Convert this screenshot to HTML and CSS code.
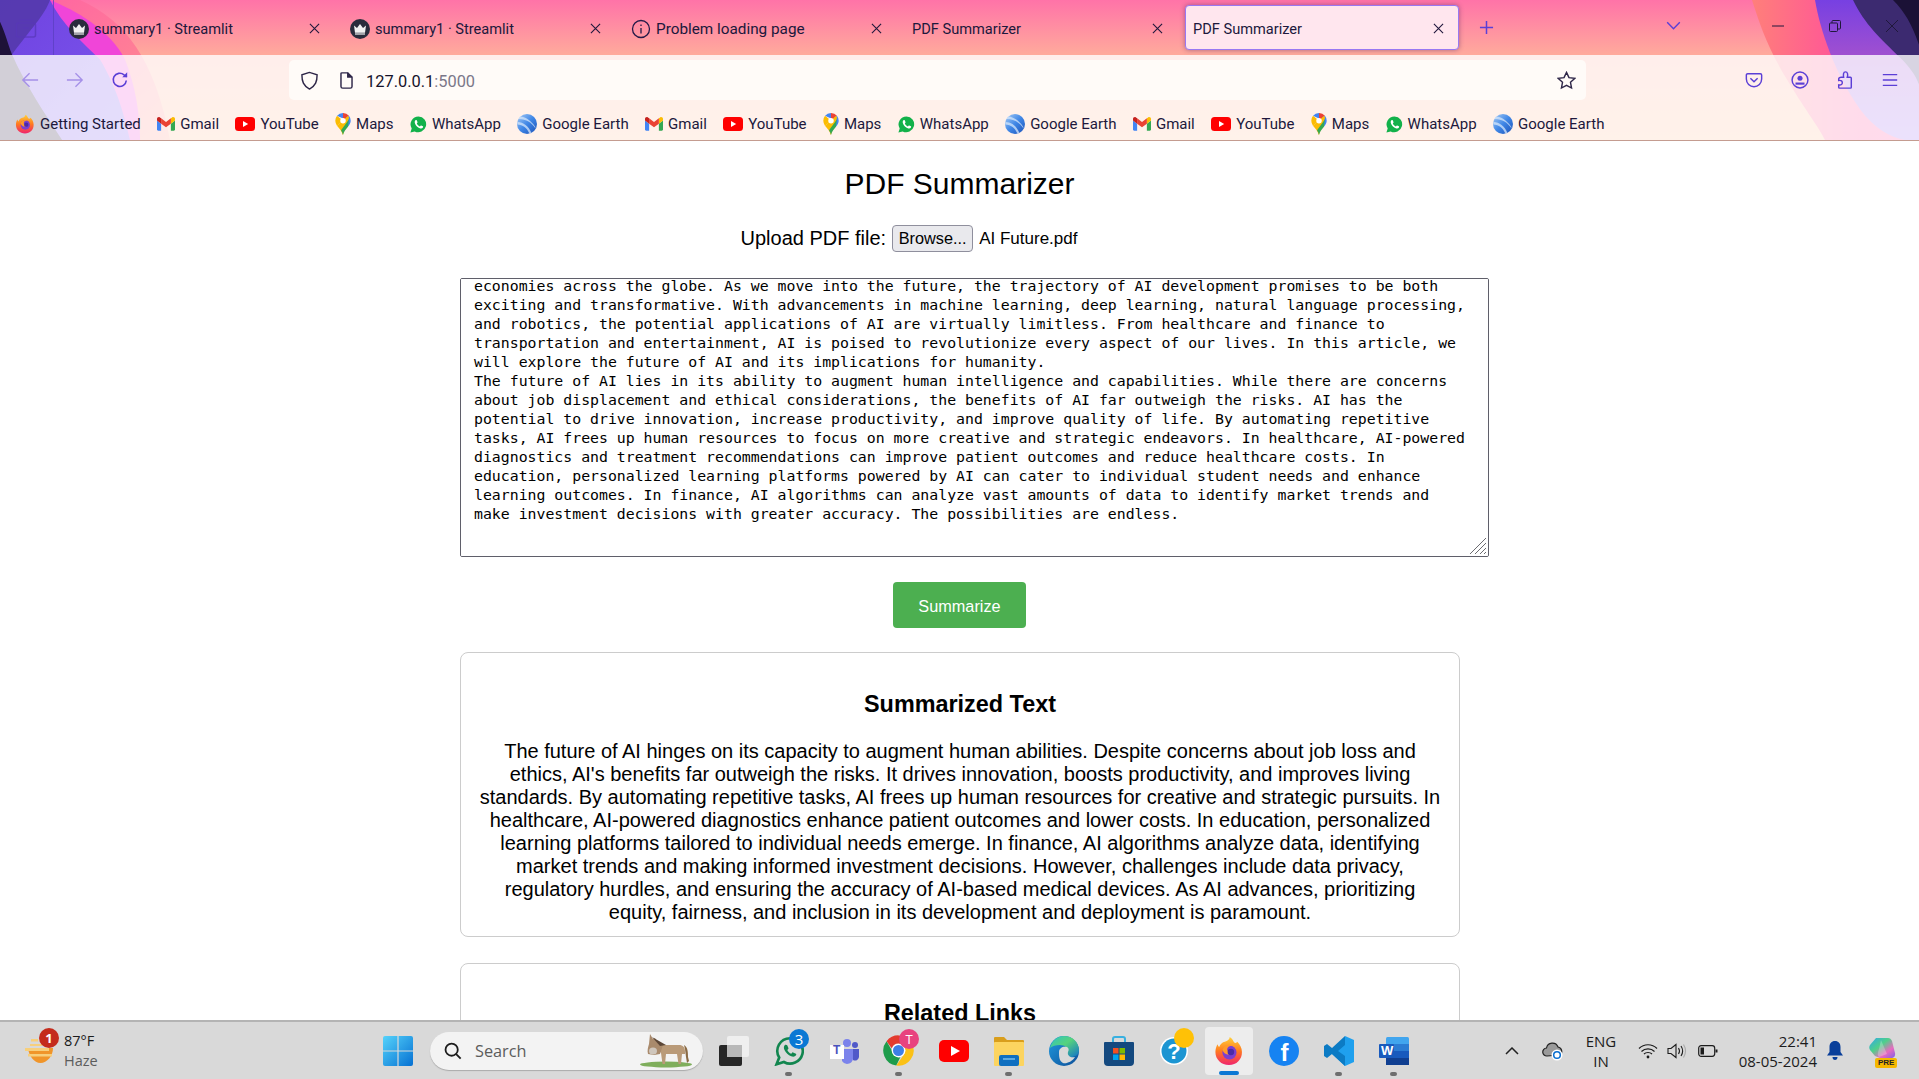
FILE: index.html
```html
<!DOCTYPE html>
<html lang="en">
<head>
<meta charset="utf-8">
<title>PDF Summarizer</title>
<link rel="stylesheet" href="styles.css">
</head>
<body>
<svg class="defs" aria-hidden="true">
  <defs>
    <linearGradient id="ffg" x1="0" y1="0" x2="0" y2="1"><stop offset="0" stop-color="#ffd23a"/><stop offset=".5" stop-color="#ff7a1f"/><stop offset="1" stop-color="#f0246e"/></linearGradient>
    <linearGradient id="edgeg" x1="0" y1="0" x2="1" y2="1"><stop offset="0" stop-color="#2fc4c4"/><stop offset=".45" stop-color="#56d37c"/><stop offset="1" stop-color="#1173c9"/></linearGradient>
    <linearGradient id="edgeb" x1="0" y1="0" x2="1" y2="1"><stop offset="0" stop-color="#1f9be0"/><stop offset="1" stop-color="#0f4f98"/></linearGradient>
    <linearGradient id="startg" x1="0" y1="0" x2="1" y2="1"><stop offset="0" stop-color="#55d3fb"/><stop offset="1" stop-color="#0670d2"/></linearGradient>
    <linearGradient id="earthg" x1="0" y1="0" x2="1" y2="1"><stop offset="0" stop-color="#a8cdf5"/><stop offset=".5" stop-color="#3f86e6"/><stop offset="1" stop-color="#1c53b8"/></linearGradient>
    <linearGradient id="copg" x1="0" y1="0" x2="1" y2="1"><stop offset="0" stop-color="#2fa8e8"/><stop offset=".4" stop-color="#4fd08a"/><stop offset=".7" stop-color="#e86ac0"/><stop offset="1" stop-color="#8060e8"/></linearGradient>
    <symbol id="ic-st" viewBox="0 0 20 20"><circle cx="10" cy="10" r="10" fill="#2a2c3c"/><path d="M4 6.500l3 2.600L10 5l3 4.100 3-2.600-1 7.200H5z" fill="#f2f2f2"/><rect x="5" y="14.400" width="10" height="1.200" fill="#f2f2f2"/></symbol>
    <symbol id="ic-ff" viewBox="0 0 32 32"><path d="M16 31C7.700 31 1.500 24.800 1.500 17c0-3.300 1-6.300 2.400-8.300.2 1.300.8 2.400 1.600 3.100C6.700 8.500 9 6.500 11.500 6c3-.6 5-2.500 5.300-5 4 2.600 3.500 5.500 6 6.500 1.500-.5 2-1.500 2-1.500 3 3 5 6.500 5 11C30 24.800 24 31 16 31z" fill="url(#ffg)"/><circle cx="16.500" cy="17.500" r="7.500" fill="#7a3fd0"/><path d="M9 15c1.500-5 7-7 12-4.500-4-.5-7 1-7 4 0 1.500 2 2.500 4 2.500 1.500 0 1 1.500-.5 2.500-3 1.500-7-.5-8.500-4.500z" fill="#ff9a2a"/><circle cx="18" cy="17" r="3.500" fill="#4a2aa8"/></symbol>
    <symbol id="ic-gm" viewBox="0 0 24 18"><path fill="#4285f4" d="M1.600 18H5.500V8.500L0 4.400V16.400C0 17.300.7 18 1.600 18z"/><path fill="#34a853" d="M18.500 18h3.900c.9 0 1.600-.7 1.600-1.600V4.400l-5.500 4.100z"/><path fill="#fbbc04" d="M18.500 1.400v7.100L24 4.400V2.200c0-2-2.300-3.200-3.900-2z"/><path fill="#ea4335" d="M5.500 8.500V1.400L12 6.300l6.500-4.900v7.100L12 13.400z"/><path fill="#c5221f" d="M0 2.200v2.200l5.500 4.100V1.400L3.900.2C2.300-1 0 .2 0 2.200z"/></symbol>
    <symbol id="ic-yt" viewBox="0 0 20 14"><rect width="20" height="14" rx="3.500" fill="#f00"/><path d="M8 4l5.200 3L8 10z" fill="#fff"/></symbol>
    <symbol id="ic-mp" viewBox="0 0 14 20"><path d="M7 0a7 7 0 0 1 5.400 2.500L7 7z" fill="#ea4335"/><path d="M1.600 2.500A7 7 0 0 1 7 0L7 5z" fill="#4285f4"/><path d="M0 7a7 7 0 0 1 1.600-4.500L7 7l-5.500 4.500Q0 9 0 7z" fill="#fbbc04"/><path d="M12.400 2.500A7 7 0 0 1 14 7c0 2-1 3.500-2.500 5.500L7 7z" fill="#4285f4"/><path d="M1.500 11.500L11.500 2.700 12.600 4 6.800 20C6 16 3.500 14 1.500 11.500z" fill="#fbbc04"/><path d="M11.500 12.500C9.500 15 7.800 16.500 7 20c-.3-1.500-.9-3-1.800-4.300L12.400 6z" fill="#34a853"/><circle cx="7" cy="7" r="2.500" fill="#fff"/></symbol>
    <symbol id="ic-wa" viewBox="0 0 20 20"><path d="M10 .5A9.300 9.300 0 0 0 2 14.600L.5 19.500l5-1.400A9.300 9.300 0 1 0 10 .5z" fill="#12b14a"/><path d="M6.500 5c-1 .8-1.300 2.200-.5 4 1 2.400 3 4.300 5.500 5.300 1.700.6 3 .2 3.700-.8.400-.6.300-1.200 0-1.400l-2-1c-.4-.1-.6 0-.8.300l-.7.900c-1.600-.6-3-1.900-3.700-3.500l.7-.8c.2-.3.2-.5.100-.8l-.9-2.100c-.3-.4-.9-.5-1.400-.1z" fill="#fff"/></symbol>
    <symbol id="ic-ea" viewBox="0 0 20 20"><circle cx="10" cy="10" r="10" fill="url(#earthg)"/><path d="M3 2.500c5 0 11 4 15 10 .5 1 .5 1.500.5 2-4-6-9-9.500-17-9.500zM.5 8c6 0 11 4 14 11l-2 .7C10 14 6 10.500.2 10.500z" fill="#d5e7fb" opacity=".75"/></symbol>
    <symbol id="ic-wa2" viewBox="0 0 30 30"><path d="M16 2.200A12.700 12.700 0 0 0 5.200 21.500L2.500 28.300l7.400-2.300A12.700 12.700 0 1 0 16 2.200z" fill="none" stroke="#12864f" stroke-width="2.600"/><path d="M11.200 8.800c-1.500 1.200-1.700 3-.7 5.200 1.400 3 3.700 5.200 6.700 6.300 2.200.8 3.900.3 4.800-1 .4-.7.3-1.300-.1-1.500l-2.800-1.400c-.4-.1-.7 0-.9.300l-1 1.100c-1.700-.7-3.100-2.100-3.900-3.900l.9-1c.3-.3.3-.6.200-1l-1.200-2.600c-.3-.6-1.400-.8-2-.5z" fill="#12864f"/></symbol>
  </defs>
</svg>

<div class="screen">
  <header class="chrome">
    <svg class="chrome-art" viewBox="0 0 1919 141" preserveAspectRatio="none" aria-hidden="true">
      <defs>
        <linearGradient id="basebg" x1="0" y1="0" x2="0" y2="1"><stop offset="0" stop-color="#ff73a8"/><stop offset=".39" stop-color="#ffaa9c"/><stop offset="1" stop-color="#ffbd95"/></linearGradient>
        <linearGradient id="mag" x1="0" y1="0" x2="1" y2="0"><stop offset="0" stop-color="#ff7f7a"/><stop offset=".6" stop-color="#ff4f9c"/><stop offset="1" stop-color="#ff48a0"/></linearGradient>
        <linearGradient id="viol" x1="0" y1="0" x2="1" y2="1"><stop offset="0" stop-color="#6f42e0"/><stop offset="1" stop-color="#7c58ee"/></linearGradient>
        <linearGradient id="violr" x1="0" y1="0" x2="0" y2="1"><stop offset="0" stop-color="#7740e2"/><stop offset=".4" stop-color="#a050d0"/><stop offset="1" stop-color="#9a6cf0"/></linearGradient>
        <linearGradient id="pinkl" x1="0" y1="0" x2="1" y2="1"><stop offset="0" stop-color="#ff5fa5"/><stop offset=".6" stop-color="#ff7f96"/><stop offset="1" stop-color="#ff9a88"/></linearGradient>
      </defs>
      <rect width="1919" height="141" fill="url(#basebg)"/>
      <path d="M80 0C125 20 155 60 170 141H0V0z" fill="url(#pinkl)"/>
      <path d="M50 0C75 10 110 30 125 60C135 85 140 115 140 141H0V0z" fill="#f045d8"/>
      <path d="M50 0C62 25 85 45 100 60C118 90 125 120 130 141H0V0z" fill="url(#viol)"/>
      <path d="M0 0H50C45 15 30 30 12 55C25 85 45 115 62 141H0z" fill="#5238a8" opacity=".85"/>
      <path d="M0 22C6 35 8 45 12 55C25 85 45 115 62 141H0z" fill="#1e1238"/>
      <path d="M1752 0C1760 25 1768 50 1790 85C1805 110 1820 130 1825 141H1919V0z" fill="url(#mag)"/>
      <path d="M1815 0C1820 30 1835 75 1860 110C1875 130 1890 138 1905 141H1919V0z" fill="url(#violr)"/>
      <path d="M1853 0C1865 25 1880 38 1900 58C1910 68 1915 75 1919 85V0z" fill="#3c2a70"/>
      <path d="M1893 0C1905 12 1912 25 1919 45V0z" fill="#1b1136"/>
    </svg>

    <div class="tabbar">
      <div class="side-btn">
        <svg width="22" height="22" viewBox="0 0 22 22" fill="none" stroke="#5838b8" stroke-width="1.500"><rect x="1.500" y="6" width="19" height="14" rx="2"/><path d="M4 3h14M8 11h6"/></svg>
      </div>
      <div class="tab"><svg class="fav"><use href="#ic-st"/></svg><span class="tab-title">summary1 · Streamlit</span><span class="tab-x"><svg viewBox="0 0 12 12"><path d="M1 1l10 10M11 1L1 11"/></svg></span></div>
      <div class="tab"><svg class="fav"><use href="#ic-st"/></svg><span class="tab-title">summary1 · Streamlit</span><span class="tab-x"><svg viewBox="0 0 12 12"><path d="M1 1l10 10M11 1L1 11"/></svg></span></div>
      <div class="tab"><svg class="fav" viewBox="0 0 20 20" fill="none" stroke="#251a48" stroke-width="1.300"><circle cx="10" cy="10" r="8.500"/><path d="M10 9v5.500M10 5.500v1.500"/></svg><span class="tab-title tab-title-wide">Problem loading page</span><span class="tab-x"><svg viewBox="0 0 12 12"><path d="M1 1l10 10M11 1L1 11"/></svg></span></div>
      <div class="tab"><span class="tab-title">PDF Summarizer</span><span class="tab-x"><svg viewBox="0 0 12 12"><path d="M1 1l10 10M11 1L1 11"/></svg></span></div>
      <div class="tab tab-active"><span class="tab-title">PDF Summarizer</span><span class="tab-x"><svg viewBox="0 0 12 12"><path d="M1 1l10 10M11 1L1 11"/></svg></span></div>
      <svg class="newtab" viewBox="0 0 16 16" fill="none" stroke="#5b3fd6" stroke-width="1.600"><path d="M8 1v14M1 8h14"/></svg>
      <svg class="alltabs" viewBox="0 0 16 10" fill="none" stroke="#5b3fd6" stroke-width="1.600"><path d="M1 1.500l7 7 7-7"/></svg>
      <svg class="winbtn win-min" viewBox="0 0 12 12" fill="none" stroke="#20183c" stroke-width="1"><path d="M0 6h12"/></svg>
      <svg class="winbtn win-res" viewBox="0 0 12 12" fill="none" stroke="#20183c" stroke-width="1"><rect x=".5" y="3" width="8" height="8.500" rx="1"/><path d="M3 3V1.500a1 1 0 0 1 1-1h6.500a1 1 0 0 1 1 1V8a1 1 0 0 1-1 1H8.500"/></svg>
      <svg class="winbtn win-cls" viewBox="0 0 12 12" fill="none" stroke="#20183c" stroke-width="1"><path d="M0 0l12 12M12 0L0 12"/></svg>
    </div>

    <div class="toolbar-wrap">
      <div class="toolbar">
        <svg class="tool tool-back" viewBox="0 0 20 20" fill="none" stroke="#a590e8" stroke-width="1.500"><path d="M19 10H2M9.500 2.500L2 10l7.500 7.500"/></svg>
        <svg class="tool tool-fwd" viewBox="0 0 20 20" fill="none" stroke="#a590e8" stroke-width="1.500"><path d="M1 10h17M10.500 2.500L18 10l-7.500 7.500"/></svg>
        <svg class="tool tool-rel" viewBox="0 0 20 20" fill="none" stroke="#5b3fd6" stroke-width="1.800"><path d="M17 10.500A7.300 7.300 0 1 1 14.500 4.300L17.500 6.500"/><path d="M18 1.500v5.500h-5.500" fill="#5b3fd6" stroke="none"/></svg>
        <div class="urlbar">
          <svg class="u-shield" viewBox="0 0 20 20" fill="none" stroke="#2e2648" stroke-width="1.500"><path d="M10 1.500L2 4c0 7 1.500 11.500 8 15 6.500-3.500 8-8 8-15z"/></svg>
          <svg class="u-page" viewBox="0 0 16 20" fill="none" stroke="#2e2648" stroke-width="1.700"><path d="M2.500 1h7L14.500 6v11a2 2 0 0 1-2 2h-9a2 2 0 0 1-2-2V2a1 1 0 0 1 1-1z"/><path d="M9.500 1v5h5" fill="#2e2648"/></svg>
          <span class="u-text">127.0.0.1<span class="u-port">:5000</span></span>
          <svg class="u-star" viewBox="0 0 20 20" fill="none" stroke="#2e2648" stroke-width="1.500"><path d="M10 1.500l2.600 5.500 6 .8-4.400 4.100 1.100 6L10 15l-5.300 2.900 1.100-6L1.400 7.800l6-.8z"/></svg>
        </div>
        <svg class="tool tool-pk" viewBox="0 0 20 20" fill="none" stroke="#5b3fd6" stroke-width="1.600"><path d="M3 3h14a1.500 1.500 0 0 1 1.500 1.500V9a8.500 8.500 0 0 1-17 0V4.500A1.500 1.500 0 0 1 3 3z"/><path d="M6 8l4 4 4-4"/></svg>
        <svg class="tool tool-ac" viewBox="0 0 20 20" fill="none" stroke="#5b3fd6" stroke-width="1.600"><circle cx="10" cy="10" r="8.800"/><circle cx="10" cy="8" r="2.800" fill="#5b3fd6" stroke="none"/><path d="M5 14h10" stroke-width="2.400"/></svg>
        <svg class="tool tool-ex" viewBox="0 0 20 20" fill="none" stroke="#5b3fd6" stroke-width="1.600"><path d="M3 19h13a1 1 0 0 0 1-1V8a1 1 0 0 0-1-1h-3.500C13.500 4 13 1 10.500 1S8 4 8.500 7H6C4.800 7 3 7.500 3 9v1.500C6 10 7 11.500 7 13s-1 3-4 2.500V18a1 1 0 0 0 1 1z"/></svg>
        <svg class="tool tool-mn" viewBox="0 0 20 20" fill="none" stroke="#5b3fd6" stroke-width="1.600"><path d="M2 4h16M2 10h16M2 16h16"/></svg>
      </div>
      <nav class="bookmarks">
        <a class="bm"><svg class="bi"><use href="#ic-ff"/></svg>Getting Started</a>
        <a class="bm"><svg class="bi bi-gm"><use href="#ic-gm"/></svg>Gmail</a>
        <a class="bm"><svg class="bi bi-yt"><use href="#ic-yt"/></svg>YouTube</a>
        <a class="bm"><svg class="bi bi-mp"><use href="#ic-mp"/></svg>Maps</a>
        <a class="bm"><svg class="bi bi-wa"><use href="#ic-wa"/></svg>WhatsApp</a>
        <a class="bm"><svg class="bi"><use href="#ic-ea"/></svg>Google Earth</a>
        <a class="bm"><svg class="bi bi-gm"><use href="#ic-gm"/></svg>Gmail</a>
        <a class="bm"><svg class="bi bi-yt"><use href="#ic-yt"/></svg>YouTube</a>
        <a class="bm"><svg class="bi bi-mp"><use href="#ic-mp"/></svg>Maps</a>
        <a class="bm"><svg class="bi bi-wa"><use href="#ic-wa"/></svg>WhatsApp</a>
        <a class="bm"><svg class="bi"><use href="#ic-ea"/></svg>Google Earth</a>
        <a class="bm"><svg class="bi bi-gm"><use href="#ic-gm"/></svg>Gmail</a>
        <a class="bm"><svg class="bi bi-yt"><use href="#ic-yt"/></svg>YouTube</a>
        <a class="bm"><svg class="bi bi-mp"><use href="#ic-mp"/></svg>Maps</a>
        <a class="bm"><svg class="bi bi-wa"><use href="#ic-wa"/></svg>WhatsApp</a>
        <a class="bm"><svg class="bi"><use href="#ic-ea"/></svg>Google Earth</a>
      </nav>
    </div>
  </header>

  <main class="page">
    <h1 class="title">PDF Summarizer</h1>
    <div class="upload">
      <label class="upload-label">Upload PDF file:</label>
      <button class="browse" type="button">Browse...</button>
      <span class="filename">AI Future.pdf</span>
    </div>
    <div class="text-wrap">
      <textarea class="source" readonly spellcheck="false">economies across the globe. As we move into the future, the trajectory of AI development promises to be both
exciting and transformative. With advancements in machine learning, deep learning, natural language processing,
and robotics, the potential applications of AI are virtually limitless. From healthcare and finance to
transportation and entertainment, AI is poised to revolutionize every aspect of our lives. In this article, we
will explore the future of AI and its implications for humanity.
The future of AI lies in its ability to augment human intelligence and capabilities. While there are concerns
about job displacement and ethical considerations, the benefits of AI far outweigh the risks. AI has the
potential to drive innovation, increase productivity, and improve quality of life. By automating repetitive
tasks, AI frees up human resources to focus on more creative and strategic endeavors. In healthcare, AI-powered
diagnostics and treatment recommendations can improve patient outcomes and reduce healthcare costs. In
education, personalized learning platforms powered by AI can cater to individual student needs and enhance
learning outcomes. In finance, AI algorithms can analyze vast amounts of data to identify market trends and
make investment decisions with greater accuracy. The possibilities are endless.</textarea>
      <svg class="grip" viewBox="0 0 18 18" fill="none" stroke="#6b6b70" stroke-width="1"><path d="M1 17L17 1M6 17L17 6M11 17l6-6M15 17l2-2"/></svg>
    </div>
    <div class="actions"><button class="summarize" type="button">Summarize</button></div>
    <section class="card card-summary">
      <h2 class="card-title">Summarized Text</h2>
      <p class="card-text">The future of AI hinges on its capacity to augment human abilities. Despite concerns about job loss and<br>ethics, AI's benefits far outweigh the risks. It drives innovation, boosts productivity, and improves living<br>standards. By automating repetitive tasks, AI frees up human resources for creative and strategic pursuits. In<br>healthcare, AI-powered diagnostics enhance patient outcomes and lower costs. In education, personalized<br>learning platforms tailored to individual needs emerge. In finance, AI algorithms analyze data, identifying<br>market trends and making informed investment decisions. However, challenges include data privacy,<br>regulatory hurdles, and ensuring the accuracy of AI-based medical devices. As AI advances, prioritizing<br>equity, fairness, and inclusion in its development and deployment is paramount.</p>
    </section>
    <section class="card card-links">
      <h2 class="card-title">Related Links</h2>
    </section>
  </main>

  <footer class="taskbar">
    <div class="tb-weather">
      <div class="weather-ic">
        <svg viewBox="0 0 30 30"><path d="M3 12h25c0 8-6 15-12.500 15S4 20 3 12z" fill="#f0952a"/><path d="M0 12h24v3H0zM3 18h24v2.500H3zM6 3h7v2.500H6zM5 8h12v2H5z" fill="#f7cf7c"/></svg>
        <span class="badge badge-red">1</span>
      </div>
      <div class="weather-text"><span class="w-temp">87°F</span><span class="w-desc">Haze</span></div>
    </div>
    <svg class="start" viewBox="0 0 30 30"><path d="M0 2a2 2 0 0 1 2-2h12.400v14.400H0zM15.600 0H28a2 2 0 0 1 2 2v12.400H15.600zM0 15.600h14.400V30H2a2 2 0 0 1-2-2zM15.600 15.600H30V28a2 2 0 0 1-2 2H15.600z" fill="url(#startg)"/></svg>
    <div class="search">
      <svg class="search-ic" viewBox="0 0 20 20" fill="none" stroke="#1c1c1c" stroke-width="2"><circle cx="8.500" cy="8.500" r="6.800"/><path d="M13.500 13.500L18.500 18.500"/></svg>
      <span class="search-text">Search</span>
      <svg class="donkey" viewBox="0 0 54 34">
        <ellipse cx="27" cy="30.500" rx="26" ry="3" fill="#7fae5c"/>
        <path d="M22 11h18c4 0 6 2 6 7v2h-3l-1 10h-2.500l-1.500-10h-11l-1 10h-2.500l-1.500-11-2-3z" fill="#b99a78"/>
        <path d="M11 0l3 5 2-1 2 4 6 3-3 9-6 1-6-1c-1-3 0-7 1-10z" fill="#a98a6c"/>
        <path d="M13 3l14 8-6 1z" fill="#5b4636"/>
        <ellipse cx="14" cy="17" rx="4" ry="3.500" fill="#cfc6bc"/>
        <path d="M45 11c4 2 4 8 4 12l1 4-2 2-1-6-1-8z" fill="#8a6a44"/>
      </svg>
    </div>
    <div class="apps">
      <div class="app"><svg class="ai" viewBox="0 0 30 30"><rect x="0" y="9" width="23" height="21" rx="2" fill="#262626"/><rect x="8" y="0" width="22" height="21" rx="2" fill="#f2f2f2" opacity=".85"/><rect x="8" y="9" width="15" height="12" fill="#b8b8b8"/></svg></div>
      <div class="app app-run"><svg class="ai"><use href="#ic-wa2"/></svg><span class="badge badge-blue">3</span></div>
      <div class="app"><svg class="ai" viewBox="0 0 30 30"><circle cx="18" cy="7" r="4" fill="#7b83eb"/><circle cx="26" cy="9" r="3" fill="#5059c9"/><path d="M13 13h11v10a6 6 0 0 1-11 2z" fill="#7b83eb"/><path d="M24 13h6v8a4 4 0 0 1-6 3z" fill="#5059c9"/><rect x="1" y="9" width="14" height="14" fill="#fff"/></svg><span class="teams-t">T</span></div>
      <div class="app app-run"><svg class="ai ai-lg" viewBox="0 0 24 24"><path d="M12 1A11 11 0 0 1 21.800 7H12a5 5 0 0 0-4.800 3.500L3.300 5.200A11 11 0 0 1 12 1z" fill="#e33b2e"/><path d="M3.300 5.200l5 8.700a5 5 0 0 0 5 3L10.400 22.900A11 11 0 0 1 3.300 5.200z" fill="#1e9c4b"/><path d="M21.800 7a11 11 0 0 1-11.400 15.900l5.900-8.500A5 5 0 0 0 15.500 8.500z" fill="#fbc116"/><circle cx="12" cy="12" r="5" fill="#fff"/><circle cx="12" cy="12" r="4" fill="#3d7fe6"/></svg><span class="badge badge-pink">T</span></div>
      <div class="app"><svg class="ai" viewBox="0 0 30 30"><rect y="4" width="30" height="22" rx="5" fill="#f00"/><path d="M12 10l9 5-9 5z" fill="#fff"/></svg></div>
      <div class="app app-run"><svg class="ai" viewBox="0 0 30 30"><path d="M0 2a1 1 0 0 1 1-1h9l3 3h16a1 1 0 0 1 1 1v4H0z" fill="#d99e1c"/><rect y="6" width="30" height="24" rx="1" fill="#fcd45f"/><rect x="5" y="19" width="20" height="11" rx="2" fill="#0f6fc0"/><path d="M9 23h12" stroke="#7fc4f0" stroke-width="1.400"/></svg></div>
      <div class="app"><svg class="ai" viewBox="0 0 30 30"><circle cx="15" cy="15" r="15" fill="url(#edgeb)"/><path d="M1 12C3 4 9 0 15 0c8 0 15 6 15 14 0 5-4 7-8 7-3 0-4-1-4-3 0-1 1-2 1-3 0-3-3-6-8-6-4 0-8 1-10 3z" fill="url(#edgeg)"/><path d="M10 16c0-4 4-6 8-5 2 1 2 3 1 5-1 4 3 6 7 5-3 5-9 7-12 6-4-2-4-7-4-11z" fill="#d9d9d9"/></svg></div>
      <div class="app"><svg class="ai" viewBox="0 0 30 30"><path d="M9 7V3a2 2 0 0 1 2-2h8a2 2 0 0 1 2 2v4" fill="none" stroke="#38b0e0" stroke-width="2"/><path d="M1 6h28a1 1 0 0 1 1 1v19a4 4 0 0 1-4 4H4a4 4 0 0 1-4-4V7a1 1 0 0 1 1-1z" fill="#14497f"/><rect x="9" y="12" width="5.500" height="5.500" fill="#f25022"/><rect x="15.500" y="12" width="5.500" height="5.500" fill="#7fba00"/><rect x="9" y="18.500" width="5.500" height="5.500" fill="#00a4ef"/><rect x="15.500" y="18.500" width="5.500" height="5.500" fill="#ffb900"/></svg></div>
      <div class="app"><svg class="ai" viewBox="0 0 30 30"><circle cx="15" cy="15" r="14" fill="#fff"/><circle cx="15" cy="15" r="12.500" fill="#1c95d2"/><text x="15" y="22.500" class="help-q">?</text></svg><span class="badge badge-yellow"></span></div>
      <div class="app app-active"><svg class="ai"><use href="#ic-ff"/></svg></div>
      <div class="app"><svg class="ai" viewBox="0 0 30 30"><circle cx="15" cy="15" r="15" fill="#1683f2"/><text x="15.500" y="25" class="fb-f">f</text></svg></div>
      <div class="app app-run"><svg class="ai" viewBox="0 0 30 30"><path d="M21 0l9 4v22l-9 4-13-12 13-10z" fill="#1fa0ee"/><path d="M21 0L8 12 3 8 0 10v10l3 2 5-4 13 12V20l-7-5 7-6z" fill="#0c7bc4"/></svg></div>
      <div class="app app-run"><svg class="ai" viewBox="0 0 30 30"><rect x="7" y="1" width="23" height="28" rx="1.500" fill="#41a5ee"/><rect x="7" y="8" width="23" height="7" fill="#2b7cd3"/><rect x="7" y="15" width="23" height="7" fill="#185abd"/><rect x="7" y="22" width="23" height="7" fill="#103f91"/><rect x="0" y="8" width="15" height="14" rx="1" fill="#185abd"/></svg><span class="word-w">W</span></div>
    </div>
    <div class="tray">
      <svg class="t-chev" viewBox="0 0 14 8" fill="none" stroke="#222" stroke-width="1.500"><path d="M1 7l6-6 6 6"/></svg>
      <svg class="t-cloud" viewBox="0 0 22 20"><path d="M5 15a4 4 0 0 1-.5-8A6 6 0 0 1 16 6a4.500 4.500 0 0 1 2 8z" fill="#9a9a9a" stroke="#222" stroke-width="1.200"/><circle cx="15" cy="14" r="5.500" fill="#fff"/><circle cx="15" cy="14" r="3.300" fill="none" stroke="#0a6fd0" stroke-width="1.500"/></svg>
      <div class="t-lang"><span>ENG</span><span>IN</span></div>
      <svg class="t-wifi" viewBox="0 0 20 16" fill="none" stroke="#1c1c1c" stroke-width="1.200"><path d="M1 5.500c5-5 13-5 18 0M3.500 8.500c3.500-3.500 9.500-3.500 13 0M6 11c2-2 6-2 8 0"/><circle cx="10" cy="14" r="1.400" fill="#1c1c1c" stroke="none"/></svg>
      <svg class="t-vol" viewBox="0 0 20 16" fill="none" stroke="#1c1c1c" stroke-width="1.100"><path d="M1 5.500h3L9 1.500v13L4 10.500H1z"/><path d="M11.500 5c1.200 1.800 1.200 4.200 0 6M14 3c2 3 2 7 0 10"/><path d="M16.500 1.500c2.500 4 2.500 9 0 13" stroke="#aaa"/></svg>
      <svg class="t-bat" viewBox="0 0 20 12" fill="none" stroke="#1c1c1c" stroke-width="1.200"><rect x=".7" y=".7" width="16" height="10.600" rx="2.500"/><rect x="2.500" y="2.500" width="3.500" height="7" fill="#1c1c1c" stroke="none"/><path d="M18.500 4.500v3" stroke-width="2"/></svg>
      <div class="t-clock"><span>22:41</span><span>08-05-2024</span></div>
      <svg class="t-bell" viewBox="0 0 16 20"><path d="M8 0c3.500 0 5.500 2.500 5.500 6v5l2.500 3.500H0L2.500 11V6C2.500 2.500 4.500 0 8 0z" fill="#0a3f9a"/><path d="M5.500 16h5c0 2-1 3-2.500 3s-2.500-1-2.500-3z" fill="#0a3f9a"/></svg>
      <div class="t-copilot">
        <svg viewBox="0 0 28 26"><path d="M8 2h12c2 0 3 1 4 3l3 12c.5 3-1 5-4 5H12l-5-2-5-6c-1-2-1-3 0-5z" fill="url(#copg)"/><path d="M13 4l6 14-8 3c-2-2-1-5 0-8z" fill="#fff" opacity=".25"/></svg>
        <span class="pre">PRE</span>
      </div>
    </div>
  </footer>
</div>
</body>
</html>
```

FILE: styles.css
```css
* { box-sizing: border-box; }
html, body { margin: 0; padding: 0; height: 100%; overflow: hidden; background: #fff; }
.defs { position: absolute; width: 0; height: 0; }
.screen { width: 1919px; height: 1079px; display: flex; flex-direction: column; overflow: hidden; font-family: "Liberation Sans", Arial, sans-serif; }

/* browser chrome */
.chrome { position: relative; height: 141px; flex: none; color: #20183c; font-family: Roboto, "Open Sans", sans-serif; border-bottom: 1px solid #c49c90; }
.chrome-art { position: absolute; left: 0; top: 0; width: 100%; height: 100%; }
.tabbar { position: relative; height: 55px; display: flex; align-items: center; }
.side-btn { width: 54px; height: 55px; padding: 17px 0 0 15px; margin-right: 7px; flex: none; border-right: 1px solid #5a3fc0; opacity: .75; }
.tab { width: 274px; height: 45px; margin-right: 7px; padding: 2px 13px 0 8px; display: flex; align-items: center; flex: none; font-size: 14.6px; border-radius: 4px; }
.tab-active { background: #ffe6ee; border: 1px solid #9878f2; box-shadow: 0 0 5px rgba(60, 30, 90, .45); padding: 2px 12px 0 7px; }
.fav { width: 20px; height: 20px; margin-right: 5px; flex: none; }
.tab-title { flex: 1; white-space: nowrap; }
.tab-title-wide { font-size: 15.300px; }
.tab-x { width: 14px; height: 14px; display: flex; flex: none; }
.tab-x svg { width: 11px; height: 11px; fill: none; stroke: #20183c; stroke-width: 1.200; margin: 1px; }
.newtab { width: 15px; height: 15px; margin-left: 13px; flex: none; }
.alltabs { width: 15px; height: 9px; margin-left: 172px; margin-top: -4px; flex: none; }
.winbtn { width: 12px; height: 12px; flex: none; margin-top: -3px; }
.win-min { margin-left: 91px; }
.win-res { margin-left: 45px; }
.win-cls { margin-left: 45px; }

.toolbar-wrap { position: relative; height: 85px; background: rgba(255, 255, 255, .8); }
.toolbar { height: 50px; display: flex; align-items: center; padding-left: 21px; }
.tool { width: 18px; height: 18px; flex: none; }
.tool-fwd { margin-left: 27px; }
.tool-rel { margin-left: 27px; }
.urlbar { width: 1297px; height: 40px; margin: 0 0 0 160px; padding: 0 10px 0 11px; background: #fffbf8; border-radius: 5px; display: flex; align-items: center; flex: none; }
.u-shield { width: 19px; height: 19px; flex: none; }
.u-page { width: 15px; height: 17px; margin-left: 20px; flex: none; }
.u-text { font-size: 16.400px; margin-left: 12px; padding-top: 2px; flex: 1; color: #15122a; }
.u-port { color: #7b7789; }
.u-star { width: 19px; height: 19px; flex: none; }
.tool-pk { margin-left: 159px; }
.tool-ac { margin-left: 28px; }
.tool-ex { margin-left: 27px; }
.tool-mn { margin-left: 27px; }
.bookmarks { height: 35px; display: flex; align-items: center; padding-left: 15px; padding-top: 3px; gap: 16.400px; font-size: 15px; }
.bm { display: flex; align-items: center; gap: 5px; white-space: nowrap; }
.bi { width: 20px; height: 20px; flex: none; }
.bi-gm { width: 18px; height: 14px; }
.bi-yt { width: 20px; height: 14px; }
.bi-mp { width: 16px; height: 22px; }
.bi-wa { width: 17px; height: 17px; }

/* page */
.page { flex: 1; min-height: 0; overflow: hidden; background: #fff; color: #000; padding-top: 24px; }
.title { margin: 0; height: 37px; line-height: 37px; text-align: center; font-size: 30px; font-weight: 400; }
.upload { margin-top: 23px; padding-right: 101px; height: 27px; display: flex; justify-content: center; align-items: center; }
.upload-label { font-size: 20px; }
.browse { margin-left: 6px; width: 81px; height: 27px; padding: 0; font: 16.300px "Liberation Sans", Arial, sans-serif; color: #000; background: #e9e9ed; border: 1px solid #8f8f9d; border-radius: 4px; }
.filename { margin-left: 6px; font-size: 17px; }
.text-wrap { position: relative; width: 1029px; height: 279px; margin: 26px 0 0 460px; border: 1px solid #5f5f6a; border-radius: 2px; overflow: hidden; }
.source { display: block; width: 100%; height: 285px; margin: -3px 0 0; padding: 0 0 0 13px; border: 0; resize: none; overflow: hidden; white-space: pre; font-family: "DejaVu Sans Mono", monospace; font-size: 14.830px; line-height: 19px; color: #000; background: #fff; outline: none; }
.grip { position: absolute; right: 1px; bottom: 1px; width: 18px; height: 18px; }
.actions { margin-top: 25px; display: flex; justify-content: center; }
.summarize { width: 133px; height: 46px; padding: 2px 0 0; border: 0; border-radius: 4px; background: #4caf50; color: #fff; font: 16.300px "Liberation Sans", Arial, sans-serif; }
.card { width: 1000px; margin: 24px 0 0 460px; border: 1px solid #ccc; border-radius: 8px; padding: 0 10px; text-align: center; }
.card-summary { height: 285px; padding-top: 37px; }
.card-links { margin-top: 26px; height: 200px; padding-top: 35px; }
.card-title { margin: 0; font-size: 23.400px; line-height: 28px; font-weight: 700; }
.card-text { margin: 22px 0 0; font-size: 20px; line-height: 23px; white-space: nowrap; }

/* taskbar */
.taskbar { position: relative; height: 59px; flex: none; display: flex; align-items: center; background: #d9d9d9; border-top: 2px solid #b4b4b4; font-family: "Open Sans", Roboto, sans-serif; color: #1c1c1c; }
.tb-weather { width: 383px; display: flex; padding-left: 25px; align-items: center; flex: none; }
.weather-ic { position: relative; width: 30px; height: 30px; }
.weather-text { margin-left: 9px; display: flex; flex-direction: column; font-size: 14.500px; line-height: 20px; }
.w-desc { color: #5c5c5c; }
.badge { position: absolute; border-radius: 50%; color: #fff; display: flex; align-items: center; justify-content: center; font-size: 13px; width: 20px; height: 20px; }
.badge-red { left: 14px; top: -8px; background: #c42b1c; font-weight: 700; }
.badge-blue { left: 28px; top: 7px; background: #0a78d4; font-size: 15px; }
.badge-pink { left: 28px; top: 7px; background: #e8437f; }
.badge-yellow { left: 28px; top: 6px; background: #ffc107; }
.start { width: 30px; height: 30px; flex: none; }
.search { width: 273px; height: 38px; margin-left: 17px; padding-left: 14px; border-radius: 19px; background: #f3f3f3; box-shadow: 0 1px 1px #aaa; display: flex; align-items: center; flex: none; }
.search-ic { width: 18px; height: 18px; flex: none; }
.search-text { margin-left: 13px; flex: 1; font-size: 16.300px; color: #5c5c5c; }
.donkey { width: 54px; height: 34px; margin-right: 10px; flex: none; }
.apps { display: flex; margin-left: 3px; flex: none; }
.app { position: relative; width: 55px; height: 57px; display: flex; align-items: center; justify-content: center; }
.ai { width: 30px; height: 30px; }
.ai-lg { width: 33px; height: 33px; }
.app-run::after { content: ""; position: absolute; left: 24px; bottom: 3px; width: 7px; height: 4px; border-radius: 2px; background: #6e6e6e; }
.app-active::before { content: ""; position: absolute; left: 4px; top: 5px; width: 48px; height: 48px; border-radius: 4px; background: #ededed; }
.app-active::after { content: ""; position: absolute; left: 18px; bottom: 4px; width: 20px; height: 4px; border-radius: 2px; background: #0a78d4; }
.app-active .ai { position: relative; }
.teams-t { position: absolute; left: 17px; top: 21px; font: 700 12px "Liberation Sans", sans-serif; color: #4b53bc; }
.word-w { position: absolute; left: 15px; top: 21px; font: 700 13px "Liberation Sans", sans-serif; color: #fff; }
.help-q { font: 700 22px "Liberation Sans", sans-serif; fill: #fff; text-anchor: middle; }
.fb-f { font: 700 24px "Liberation Sans", sans-serif; fill: #fff; text-anchor: middle; }
.tray { margin-left: 84px; display: flex; align-items: center; flex: none; height: 57px; }
.t-chev { width: 14px; height: 8px; flex: none; }
.t-cloud { width: 22px; height: 20px; margin-left: 23px; flex: none; }
.t-lang { width: 40px; margin-left: 17px; display: flex; flex-direction: column; align-items: center; font-size: 15px; line-height: 20px; flex: none; }
.t-wifi { width: 20px; height: 16px; margin-left: 17px; flex: none; }
.t-vol { width: 20px; height: 16px; margin-left: 9px; flex: none; }
.t-bat { width: 20px; height: 12px; margin-left: 11px; flex: none; }
.t-clock { width: 99px; display: flex; flex-direction: column; align-items: flex-end; font-size: 15px; line-height: 20px; flex: none; }
.t-bell { width: 16px; height: 20px; margin-left: 10px; flex: none; }
.t-copilot { position: relative; width: 28px; height: 30px; margin-left: 25px; flex: none; }
.t-copilot svg { width: 28px; height: 26px; display: block; }
.pre { position: absolute; left: 7px; bottom: -2px; padding: 0 3px; border-radius: 2px; background: #f5b800; font: 700 8px/10px "Liberation Sans", sans-serif; color: #222; }
```
